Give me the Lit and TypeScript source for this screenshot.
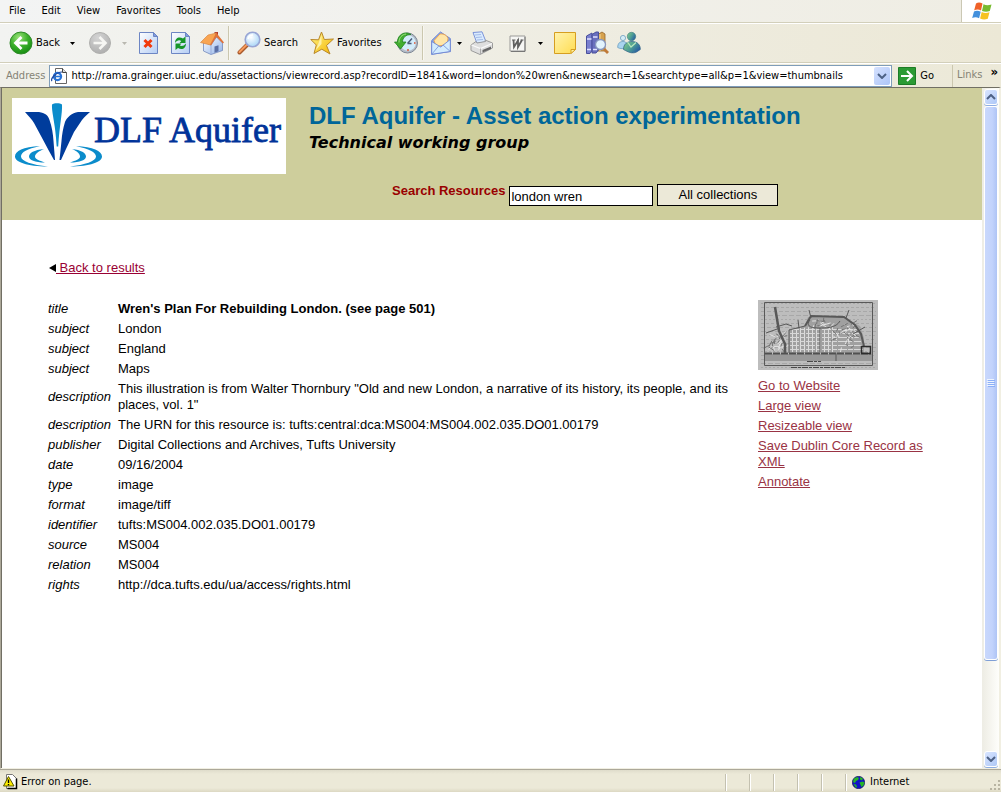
import { LitElement, html, css, svg, nothing } from "lit";
import { customElement, state } from "lit/decorators.js";

const icons = {
  back: html`<svg viewBox="0 0 24 24" width="24" height="24"><defs><radialGradient id="green" cx=".4" cy=".25" r=".8"><stop offset="0" stop-color="#9be27a"/><stop offset=".5" stop-color="#3db12c"/><stop offset="1" stop-color="#128a10"/></radialGradient></defs><circle cx="12" cy="12" r="11" fill="url(#green)" stroke="#2f8a28"/><path d="M18.500 12H7M12.500 6L6.500 12l6 6" fill="none" stroke="#fff" stroke-width="2.800"/></svg>`,
  forward: html`<svg viewBox="0 0 24 24" width="24" height="24"><defs><radialGradient id="grey" cx=".4" cy=".25" r=".8"><stop offset="0" stop-color="#d4d4d4"/><stop offset="1" stop-color="#adadad"/></radialGradient></defs><circle cx="12" cy="12" r="10.500" fill="url(#grey)" stroke="#b0b0ae"/><path d="M5.500 12H17M11.500 6l6 6-6 6" fill="none" stroke="#f6f6f3" stroke-width="2.600"/></svg>`,
  stop: html`<svg viewBox="0 0 24 24" width="24" height="24"><defs><linearGradient id="sheet" x2="1" y2="1"><stop offset="0" stop-color="#fff"/><stop offset="1" stop-color="#b4cdf4"/></linearGradient></defs><path d="M3.500 1.500h14l4 4v17h-18z" fill="url(#sheet)" stroke="#6d86c4"/><path d="M17.500 1.500v4h4z" fill="#7f9be0" stroke="#6d86c4"/><path d="M8.500 9l7 7m0-7l-7 7" stroke="#f23a0c" stroke-width="3"/></svg>`,
  refresh: html`<svg viewBox="0 0 24 24" width="24" height="24"><defs><linearGradient id="sheet2" x2="1" y2="1"><stop offset="0" stop-color="#fff"/><stop offset="1" stop-color="#b4cdf4"/></linearGradient></defs><path d="M3.500 1.500h14l4 4v17h-18z" fill="url(#sheet2)" stroke="#6d86c4"/><path d="M17.500 1.500v4h4z" fill="#7f9be0" stroke="#6d86c4"/><path d="M7 12c0-5 4-7 8-4.500l2.500-2v6.500h-6l1.800-2C11 8.500 9 9.500 7 12z" fill="#17962a"/><path d="M18 12.500c0 5-4 7-8 4.500l-2.500 2v-6.500h6L11.700 14.500c2.300 1 4.300.5 6.300-2z" fill="#17962a"/></svg>`,
  home: html`<svg viewBox="0 0 24 24" width="24" height="24"><defs><linearGradient id="wall" x2="1" y2="1"><stop offset="0" stop-color="#fff"/><stop offset="1" stop-color="#8fb2ea"/></linearGradient></defs><path d="M14.500 1H18v6h-3.500z" fill="#b03a2c"/><path d="M3.500 11l7.500 3 5.500-8 6 6v7.500L11 23.500l-7.500-3.500z" fill="url(#wall)" stroke="#7489bb" stroke-width=".8"/><path d="M11 14v9.500" stroke="#9aafda"/><path d="M.5 11.500L8 4l8.500-2L10.500 14z" fill="#f9a552" stroke="#d98a45" stroke-width=".7"/><path d="M16.500 2l7.500 9.500-1.200 1L16.500 6l-5.500 8.500-.8-1z" fill="#e0733a"/><path d="M14.500 15.500l4-1.200v6l-4 1.400z" fill="#5a6fa5"/></svg>`,
  search: html`<svg viewBox="0 0 24 24" width="24" height="24"><defs><radialGradient id="lens" cx=".4" cy=".35" r=".7"><stop offset="0" stop-color="#fff"/><stop offset="1" stop-color="#a4d3f6"/></radialGradient></defs><path d="M2.500 21.500l8-8" stroke="#a85a2c" stroke-width="4" stroke-linecap="round"/><path d="M2.500 21l7.500-7.500" stroke="#f79a5c" stroke-width="2" stroke-linecap="round"/><circle cx="15.500" cy="8.500" r="7.300" fill="url(#lens)" stroke="#98a5d4" stroke-width="1.600"/><path d="M11 8a5 5 0 0 1 5-4" stroke="#fff" stroke-width="1.500" fill="none"/></svg>`,
  star: html`<svg viewBox="0 0 24 24" width="24" height="24"><defs><linearGradient id="gold" x2="1" y2="1"><stop offset="0" stop-color="#fff68a"/><stop offset="1" stop-color="#f4b400"/></linearGradient></defs><path d="M11.500 1l2.800 7.500 9.200-.5-7 6.500 3.500 8.500-8.200-4.800L4 22.500 6.300 14 .8 8.500l7.700.3z" fill="url(#gold)" stroke="#b9882a" stroke-linejoin="round"/><path d="M11.500 4v9l-6 6.500 2.500-6z" fill="#fffbd0" opacity=".7"/></svg>`,
  history: html`<svg viewBox="0 0 24 24" width="24" height="24"><circle cx="13.500" cy="12" r="10" fill="#b4bcc8" stroke="#7c8694"/><circle cx="14" cy="12" r="7.800" fill="#d3ecfa"/><path d="M17 3.500C11-.5 3.500 3.500 3.500 11H.5l6 7 5.500-7H8.500c0-4 3-7.500 8.500-7.500z" fill="#43ad30" stroke="#1f8420" stroke-width=".8"/><path d="M5 11.500c0-5 3-8 7-8.500" stroke="#9ae283" fill="none"/><path d="M13.500 12.500l4.500-5M13.500 12.500h4" stroke="#4d5c78" stroke-width="1.500"/><path d="M14 18v2M20 12h1.500" stroke="#e0502c" stroke-width="1.400"/></svg>`,
  mail: html`<svg viewBox="0 0 20 24" width="20" height="24"><path d="M.7 9.500L9.500 1l9.800 6.500v13L.7 23.300z" fill="#86a8ec" stroke="#6f86d2" stroke-width="1"/><path d="M3 9.500l6-6.500c4-.5 7 1.500 8 4.500l-1 6-11 2z" fill="#ffe6a8" stroke="#f0a246" stroke-width=".9"/><path d="M.7 10.500l9 5.500 9.600-7.500v12L.7 23.300z" fill="#d3ecfe" stroke="#6f86d2" stroke-width=".9"/><path d="M.7 23.300l7-8.300M19.300 20.500L12 14" stroke="#7c97da" stroke-width=".9"/></svg>`,
  print: html`<svg viewBox="0 0 24 24" width="24" height="24"><path d="M4 1.500L13 .8l4 10-9 1.500z" fill="#d9eafe" stroke="#7b93d8"/><path d="M6 4l6-.5M7 6.500l6-.5M8 9l6-.5" stroke="#a3bbe8"/><path d="M2 14l5-3.500 1 1.500 8.500-1.500-.5-1.500 7.500 3v5L11 23.500l-9-4z" fill="#dedede" stroke="#9b9b9b"/><path d="M2.500 14l9 3.500 11.500-5" fill="none" stroke="#fafafa" stroke-width="1.300"/><path d="M11.500 17.500v5.500" stroke="#aaa"/><path d="M13.500 19l8.500-3.500v2.500l-8.500 3.500z" fill="#666"/></svg>`,
  word: html`<svg viewBox="0 0 24 24" width="24" height="24"><path d="M5 5h15v15H5z" fill="#f6f6f4" stroke="#9a9a98"/><path d="M20 6v14.500H6" stroke="#777" fill="none"/><path d="M8.500 9l.5 7 4-6.500V16l4-7" fill="none" stroke="#606060" stroke-width="1.800"/><path d="M7 9h3.500m1.500 0h2m1.500 0H18.500" stroke="#606060"/></svg>`,
  note: html`<svg viewBox="0 0 24 24" width="24" height="24"><defs><linearGradient id="pad" x2="1" y2="1"><stop offset="0" stop-color="#fff3ae"/><stop offset="1" stop-color="#ffdc50"/></linearGradient></defs><path d="M1.500 1.500h21V18.500l-5 4h-16z" fill="url(#pad)" stroke="#d69e20"/><path d="M22.500 18.500h-4.500v4z" fill="#fff3a0" stroke="#d69e20"/></svg>`,
  research: html`<svg viewBox="0 0 24 24" width="24" height="24"><path d="M12 4l5-3 3 2v17h-8z" fill="#d6a24e" stroke="#94652a" stroke-width=".8"/><path d="M15 3v17" stroke="#f4d89a"/><path d="M1.500 5L7 2v17.500l-2 3H1.500z" fill="#7a80cf" stroke="#4a509c"/><path d="M7 3.500l4-2.500h2.500v18l-2.500 3H7z" fill="#696fbe" stroke="#4a509c"/><path d="M2 8h4.500M2 18.500h4M8 6h4.500M8 18.500h4" stroke="#dfe1ff" stroke-width="1.400"/><path d="M19 18l4 4" stroke="#c07a38" stroke-width="2.800"/><circle cx="15.500" cy="13.500" r="5" fill="#e2f3fd" stroke="#8796bd" stroke-width="1.300"/></svg>`,
  people: html`<svg viewBox="0 0 24 24" width="24" height="24"><defs><linearGradient id="front" x2="1" y2=".6"><stop offset="0" stop-color="#86cf86"/><stop offset=".6" stop-color="#4b9a96"/><stop offset="1" stop-color="#2a5fa2"/></linearGradient></defs><circle cx="6" cy="7" r="2.600" fill="#d4ecf6" stroke="#6f9fc0" stroke-width=".8"/><path d="M.7 16.500c0-4 2-6 5.300-6s4 2 4 6c-3 1.500-7 1.500-9.300 0z" fill="#a9d4ee" stroke="#6f9fc0" stroke-width=".8"/><circle cx="14.500" cy="5.500" r="4.200" fill="url(#front)" stroke="#3a7a80" stroke-width=".6"/><path d="M6.500 18.500c0-5 3-8 8.500-8s8.500 3.500 8.300 8c-2 1-3.300 3-6.300 3.300-4 .7-7.500-1.800-10.500-3.300z" fill="url(#front)" stroke="#2d6286" stroke-width=".7"/><path d="M10.500 11l3.500 5 5-4.500" stroke="#b8e8bc" stroke-width="1.200" fill="none"/></svg>`,
};

const arrow = html`<svg viewBox="0 0 5 3" width="5" height="3"><path d="M0 0h5L2.500 3z" fill="currentColor"/></svg>`;
const chevron = (up: boolean) => html`<svg viewBox="0 0 10 6" width="10" height="6"><path d="${up ? "M1 5l4-4 4 4" : "M1 1l4 4 4-4"}" fill="none" stroke="#4d6185" stroke-width="2"/></svg>`;

const record: [string, string][] = [
  ["title", "Wren's Plan For Rebuilding London. (see page 501)"],
  ["subject", "London"],
  ["subject", "England"],
  ["subject", "Maps"],
  ["description", 'This illustration is from Walter Thornbury "Old and new London, a narrative of its history, its people, and its places, vol. 1"'],
  ["description", "The URN for this resource is: tufts:central:dca:MS004:MS004.002.035.DO01.00179"],
  ["publisher", "Digital Collections and Archives, Tufts University"],
  ["date", "09/16/2004"],
  ["type", "image"],
  ["format", "image/tiff"],
  ["identifier", "tufts:MS004.002.035.DO01.00179"],
  ["source", "MS004"],
  ["relation", "MS004"],
  ["rights", "http://dca.tufts.edu/ua/access/rights.html"],
];

const chrome = css`
  * { box-sizing: border-box; }
  button { font: inherit; color: inherit; background: none; border: 0; padding: 0; margin: 0; display: flex; align-items: center; justify-content: center; }
  svg { display: block; flex: none; }
`;

@customElement("browser-toolbar")
class BrowserToolbar extends LitElement {
  static styles = [chrome, css`
    :host { display: block; }
    .menu { display: flex; height: 23px; border-bottom: 1px solid #d2cfba; background: linear-gradient(90deg, #f3f4f4, #efede3); }
    .menu nav { display: flex; flex: 1; padding-left: 1px; border-right: 1px solid #cbc8b4; }
    .menu nav button { padding: 0 8px; }
    .flag { width: 39px; background: #fff; display: grid; place-items: center; }
    .tools { display: flex; align-items: center; height: 40px; padding-left: 5px; border-top: 1px solid #fff; border-bottom: 1px solid #d2cfba; background: linear-gradient(90deg, #f2f3f1, #ece8d6); }
    .tool { height: 32px; padding: 0 4px; gap: 3px; }
    .gap { margin-right: 4px; }
    .drop { width: 16px; height: 32px; }
    .drop.narrow { width: 10px; }
    .off { color: #b9b8b0; }
    .rule { width: 2px; height: 34px; margin-right: 3px; border-left: 1px solid #cbc7af; border-right: 1px solid #f8f7f0; }
    .address { display: flex; align-items: center; height: 24px; padding-left: 6px; border-top: 1px solid #fff; background: linear-gradient(90deg, #f0f0ea, #ece9d8); }
    .address > label, .links { color: #858375; }
    .combo { flex: 1; display: flex; align-items: center; height: 22px; margin-left: 4px; padding: 1px; background: #fff; border: 1px solid #7f9db9; }
    .combo input { flex: 1; min-width: 0; height: 18px; border: 0; padding: 0 4px; font: inherit; color: #000; background: none; outline: 0; }
    .pick { width: 16px; height: 18px; background: linear-gradient(135deg, #d6e2fe, #adc5f8); border-radius: 2px; }
    .go { gap: 4px; padding: 0 18px 0 6px; }
    .links { display: flex; gap: 8px; height: 22px; padding: 3px 4px; border-left: 1px solid #cbc7af; width: 49px; }
    .more { color: #000; font-weight: bold; font-size: 13px; line-height: 8px; align-items: flex-start; }
  `];

  private tool(name: string, icon: unknown, text = "") {
    return html`<button class="tool ${text ? "gap" : ""}" aria-label=${name}>${icon}${text ? html`<span>${text}</span>` : nothing}</button>`;
  }

  render() {
    return html`
      <div class="menu">
        <nav>${["File", "Edit", "View", "Favorites", "Tools", "Help"].map((m) => html`<button>${m}</button>`)}</nav>
        <div class="flag"><svg viewBox="0 0 20 18" width="20" height="18"><path d="M4 1.500c2-1.500 4-1.500 6.500 0L9 8.500C7 7.300 4.500 7.300 2.200 8.300z" fill="#ef6128"/><path d="M11.500 2.300c2.500 1.200 5 1.200 8 .2L17.800 9c-2.500 1-5 1-7.800 0z" fill="#78bb30"/><path d="M2 9.500c2-1 4.500-1 6.700.3l-1.600 6.500C5 15 2.500 15 .2 16z" fill="#4390dc"/><path d="M9.700 10c2.500 1.200 5 1.200 7.800.2l-1.700 6.500c-2.500 1-5 1-7.700-.1z" fill="#f6c222"/></svg></div>
      </div>
      <div class="tools">
        <button class="tool">${icons.back}<span>Back</span></button>
        <button class="drop gap" aria-label="Back list">${arrow}</button>
        ${this.tool("Forward", icons.forward)}
        <button class="drop off" aria-label="Forward list">${arrow}</button>
        ${this.tool("Stop", icons.stop)}${this.tool("Refresh", icons.refresh)}${this.tool("Home", icons.home)}
        <span class="rule"></span>
        ${this.tool("Search", icons.search, "Search")}
        ${this.tool("Favorites", icons.star, "Favorites")}
        ${this.tool("History", icons.history)}
        <span class="rule"></span>
        ${this.tool("Mail", icons.mail)}
        <button class="drop narrow" aria-label="Mail list">${arrow}</button>
        <span class="gap">${this.tool("Print", icons.print)}</span>
        ${this.tool("Edit", icons.word)}
        <button class="drop" aria-label="Edit list">${arrow}</button>
        ${this.tool("Note", icons.note)}${this.tool("Research", icons.research)}${this.tool("Messenger", icons.people)}
      </div>
      <div class="address">
        <label for="url">Address</label>
        <div class="combo">
          <svg viewBox="0 0 16 16" width="16" height="16"><path d="M4.500.5h7l4 4v11h-11z" fill="#fff" stroke="#666"/><path d="M11.500.5v4h4" fill="#ddd" stroke="#444"/><circle cx="6.500" cy="8.500" r="3.600" fill="none" stroke="#2673d8" stroke-width="2.200"/><path d="M4 8.500h6" stroke="#2673d8" stroke-width="1.600"/><path d="M1 13c-2-2 4-9 10-9" fill="none" stroke="#2149a0" stroke-width="1.200"/></svg>
          <input id="url" value="http://rama.grainger.uiuc.edu/assetactions/viewrecord.asp?recordID=1841&word=london%20wren&newsearch=1&searchtype=all&p=1&view=thumbnails" />
          <button class="pick" aria-label="Address list">${chevron(false)}</button>
        </div>
        <button class="go"><svg viewBox="0 0 18 18" width="18" height="18"><path d="M.5.5h17v17H.5z" fill="#2b9a34" stroke="#1c7c26"/><path d="M3 9h11M9 4l5 5-5 5" fill="none" stroke="#fff" stroke-width="2"/></svg>Go</button>
        <div class="links"><span>Links</span><button class="more" aria-label="More links">»</button></div>
      </div>`;
  }
}

@customElement("aquifer-logo")
class AquiferLogo extends LitElement {
  static styles = css`
    :host { display: block; background: #fff; }
    svg { display: block; }
    .word { font: 36px "Liberation Serif", serif; fill: #003399; stroke: #003399; stroke-width: 0.800px; }
  `;
  render() {
    return html`<svg viewBox="0 0 274 76" width="274" height="76" role="img" aria-label="DLF Aquifer">
      <path d="M40 6.500c2-1.800 8-1.800 10 0 .5 9-2.500 20-3.800 42h-1.500C43.500 25 39.500 15 40 6.500z" fill="#0b8ccb"/>
      <path d="M13 14h14c6 1 9 3 10.500 8 2.500 7 3.500 14 4 21l1.500 19h-1L37 53 29 38 22 25c-2-4-6-7-9-11z" fill="#003c9c"/>
      <path d="M78 14H66c-6 1-11 5-13 10-2 6-3 13-3.500 19l-2 19h1.500L54 51l8-17 8-12c2-3 5-5 8-8z" fill="#003c9c"/>
      <path d="M28 48C11 49 3 53 3 58.500S15 68.500 36 68.500C20 67 9 63 9 58.500S15 51 28 48z" fill="#0b8ccb"/>
      <path d="M32 51c-10 1-15 4-15 7.500S23 64.500 33 64.500c-6-2-10-3.500-10-6S27 53 32 51z" fill="#0b8ccb"/>
      <path d="M64 48c17 1 26 5 26 10.500S78 68.500 58 68.500C73 67 84 63 84 58.500S77 51 64 48z" fill="#0b8ccb"/>
      <path d="M60 51c9 1 14 4 14 7.500S68 64.500 58 64.500c6-2 10-3.500 10-6S65 53 60 51z" fill="#0b8ccb"/>
      <text class="word" x="82" y="44">DLF Aquifer</text>
    </svg>`;
  }
}

@customElement("plan-thumbnail")
class PlanThumbnail extends LitElement {
  static styles = css`:host, svg { display: block; }`;
  render() {
    const rand = (n: number) => { const v = Math.sin(n * 127.1) * 43758.5; return v - Math.floor(v); };
    const texture = Array.from({ length: 17 }, (_, i) => svg`<path d="M3 ${3.5 + i * 4}H118" stroke="#a8a8a8" stroke-dasharray="${2 + (i % 4)} 2"/>`);
    const streets = Array.from({ length: 11 }, (_, i) => svg`<path d="M${34.5 + i * 4} ${30 - rand(i) * 3}V52" stroke="#dcdcdc"/>`);
    const lanes = Array.from({ length: 6 }, (_, i) => svg`<path d="M32 ${29.5 + i * 4}H${100 + i}" stroke="#d8d8d8" stroke-dasharray="9 1 5 1"/>`);
    const scatter = (count: number, x: number, y: number, w: number, h: number, seed: number) =>
      Array.from({ length: count }, (_, i) => {
        const k = i + seed;
        return svg`<path d="M${x + rand(k * 1.37) * w} ${y + rand(k * 2.71 + 37) * h}l${rand(k * 3.3 + 71) * 14 - 7} ${rand(k * 4.9 + 113) * 12 - 6}" stroke="${i % 2 ? "#747474" : "#e2e2e2"}"/>`;
      });
    return html`<svg viewBox="0 0 120 70" width="120" height="70" role="img" aria-label="Wren's Plan For Rebuilding London">
      <path d="M0 0h120v70H0z" fill="#bdbdbd"/>${texture}
      <path d="M31 53V29l16-3 3-9h34l18 9 4 12v15z" fill="#a0a0a0"/>
      ${streets}${lanes}${scatter(36, 10, 34, 18, 16, 3)}${scatter(40, 78, 24, 20, 24, 60)}${scatter(16, 52, 20, 24, 6, 150)}
      <path d="M7 54h107v7H7z" fill="#989898"/>
      <path d="M7 53.500h106" stroke="#505050" stroke-width="2" stroke-dasharray="7 1"/>
      <g fill="none" stroke="#585858">
        <path d="M6.500 2.500h108v63H6.500z"/>
        <path d="M17 7l4 24 6 13v9" stroke-width="2.500"/>
        <path d="M31 53V30l16-4M53 18l-2-8M88 18l3-8M41 28l-1-8M95 34l12-7M78 53v8M18 27l10-3 6 2M8 33l14-5"/>
        <path d="M47 26l6-10 33 1 11 8 6 9 3 12" stroke-width="2"/>
        <path d="M52 20c-4 5-1 8 8 8s18 0 22-7M62 28v24"/>
        <path d="M103.500 46.500h9v7h-9z" stroke="#2c2c2c" stroke-width="1.500"/>
      </g>
      <path d="M33 67.500h55M49 61.500h14" stroke="#484848" stroke-dasharray="6 1 3 1"/>
    </svg>`;
  }
}

@customElement("app-root")
class AppRoot extends LitElement {
  @state() private query = "london wren";

  static styles = [chrome, css`
    :host { display: flex; flex-direction: column; height: 100vh; overflow: hidden; background: #ece9d8; color: #000; font: 11px/14px "DejaVu Sans Condensed", "DejaVu Sans", sans-serif; }
    .window { flex: 1; min-height: 0; display: flex; border: solid; border-width: 1px 2px 1px 1px; border-color: #716f64 #f1efe2 #f1efe2 #aca899; }
    .page { flex: 1; min-width: 0; background: #fff; border-left: 1px solid #716f64; font: 13px/16px "Liberation Sans", Arial, sans-serif; }
    .banner { display: flex; align-items: flex-start; gap: 23px; min-height: 132px; padding: 10px 10px 14px; background: #cece9c; }
    .heading { flex: 1; }
    h1 { margin: 0; padding-top: 4px; font-size: 24px; line-height: 28px; color: #006699; }
    h2 { margin: 0; font: italic bold 16px/26px "DejaVu Sans", sans-serif; }
    form { display: flex; align-items: flex-end; gap: 4px; margin: 28px 0 0 83px; }
    form label { align-self: flex-start; line-height: 14px; font-weight: bold; color: #990000; }
    form input { width: 144px; height: 20px; padding: 0 1px; border: 1px solid #000; font: inherit; color: #000; border-radius: 0; background: #fff; }
    form button { width: 121px; height: 22px; border: 1px solid #000; background: #ece9d8; }
    .body { display: grid; grid-template-columns: 1fr 172px; column-gap: 24px; padding: 40px 52px 0 46px; }
    .home { grid-column: 1 / -1; display: flex; align-items: center; padding: 0 0 23px 1px; }
    a { color: #993344; text-underline-offset: 1px; }
    .home a { color: #990033; white-space: pre; }
    table { border-collapse: collapse; align-self: start; }
    th, td { padding: 2px 0; text-align: left; font-weight: normal; vertical-align: middle; }
    th { width: 70px; font-style: italic; }
    tr:first-child td { font-weight: bold; }
    aside { display: flex; flex-direction: column; align-items: flex-start; gap: 4px; padding-top: 1px; }
    aside plan-thumbnail { margin-bottom: 4px; }
    .scroll { width: 17px; display: flex; flex-direction: column; padding: 1px; background: linear-gradient(90deg, #eeede5, #fefefb); border-left: 1px solid #eeede5; }
    .scroll button { height: 16px; border: 1px solid #fff; border-radius: 3px; background: linear-gradient(135deg, #d9e5ff, #aec8f7); box-shadow: 0 1px #8faee2; }
    .track { flex: 1; padding: 1px 0; }
    .thumb { height: 86%; display: grid; place-items: center; border: 1px solid #fff; border-radius: 3px; background: linear-gradient(90deg, #c9d8fc, #c2d3fc 60%, #aec4f5); box-shadow: 0 1px #7f9fd6; }
    .status { display: flex; align-items: center; height: 23px; padding-top: 2px; border-top: 1px solid #aca899; background: linear-gradient(#dfdccb, #ece9d8 4px, #ece9d8 18px, #dcd8c2); }
    .status .error { flex: 1; display: flex; align-items: center; gap: 3px; padding-left: 3px; }
    .pane, .zone { height: 17px; border-left: 1px solid #c4c1b0; box-shadow: inset 1px 0 #fff; }
    .pane { width: 24px; }
    .zone { width: 156px; display: flex; align-items: center; gap: 5px; padding-left: 6px; }
    .grip { margin-left: auto; align-self: flex-end; }
  `];

  render() {
    return html`
      <browser-toolbar></browser-toolbar>
      <div class="window">
        <main class="page">
          <header class="banner">
            <aquifer-logo></aquifer-logo>
            <div class="heading">
              <h1>DLF Aquifer - Asset action experimentation</h1>
              <h2>Technical working group</h2>
              <form @submit=${(e: Event) => e.preventDefault()}>
                <label for="q">Search Resources</label>
                <input id="q" .value=${this.query} @input=${(e: Event) => (this.query = (e.target as HTMLInputElement).value)} />
                <button>All collections</button>
              </form>
            </div>
          </header>
          <div class="body">
            <div class="home"><svg viewBox="0 0 7 8" width="7" height="8"><path d="M7 0v8L0 4z" fill="#000"/></svg><a href="#results"> Back to results</a></div>
            <table><tbody>${record.map(([name, value]) => html`<tr><th scope="row">${name}</th><td>${value}</td></tr>`)}</tbody></table>
            <aside>
              <plan-thumbnail></plan-thumbnail>
              ${["Go to Website", "Large view", "Resizeable view", "Save Dublin Core Record as XML", "Annotate"].map((t) => html`<a href="#">${t}</a>`)}
            </aside>
          </div>
        </main>
        <div class="scroll">
          <button aria-label="Scroll up">${chevron(true)}</button>
          <div class="track"><div class="thumb"><svg viewBox="0 0 8 8" width="8" height="8"><path d="M0 .5h7M0 2.500h7M0 4.500h7M0 6.500h7" stroke="#eef4fe"/><path d="M1 1.500h7M1 3.500h7M1 5.500h7M1 7.500h7" stroke="#8cb0f8"/></svg></div></div>
          <button aria-label="Scroll down">${chevron(false)}</button>
        </div>
      </div>
      <footer class="status">
        <div class="error"><svg viewBox="0 0 15 16" width="15" height="16"><path d="M3.500.5h6l4 4v10h-10z" fill="#fff" stroke="#777"/><path d="M13.500 4.500v10h-9" fill="none" stroke="#000" stroke-width="1.500"/><path d="M5.500 2.500l5.500 9.500H.5z" fill="#ffee00" stroke="#555500"/><path d="M5.500 5.500v3.500M5.500 10v1.200" stroke="#000" stroke-width="1.400"/></svg><span>Error on page.</span></div>
        ${Array.from({ length: 5 }, () => html`<span class="pane"></span>`)}
        <div class="zone">
          <svg viewBox="0 0 13 13" width="13" height="13"><circle cx="6.500" cy="6.500" r="6.200" fill="#1212c8" stroke="#111144" stroke-width=".6"/><path d="M2 2.500l3-1.500 2 1-1 2-2 1-1 2-2-1zM8 1l3 1.500-1 2-2-1zM7.500 6.500l3-1 2 1-1 3-2 1.500-1-2zM1.500 8l2.500.5 1 2-1 1.500z" fill="#26b526"/></svg>
          <span>Internet</span>
          <svg class="grip" viewBox="0 0 12 12" width="12" height="12"><path d="M9 1h2v2H9zM9 5h2v2H9zM5 5h2v2H5zM9 9h2v2H9zM5 9h2v2H5zM1 9h2v2H1z" fill="#b8b4a2"/></svg>
        </div>
      </footer>`;
  }
}
